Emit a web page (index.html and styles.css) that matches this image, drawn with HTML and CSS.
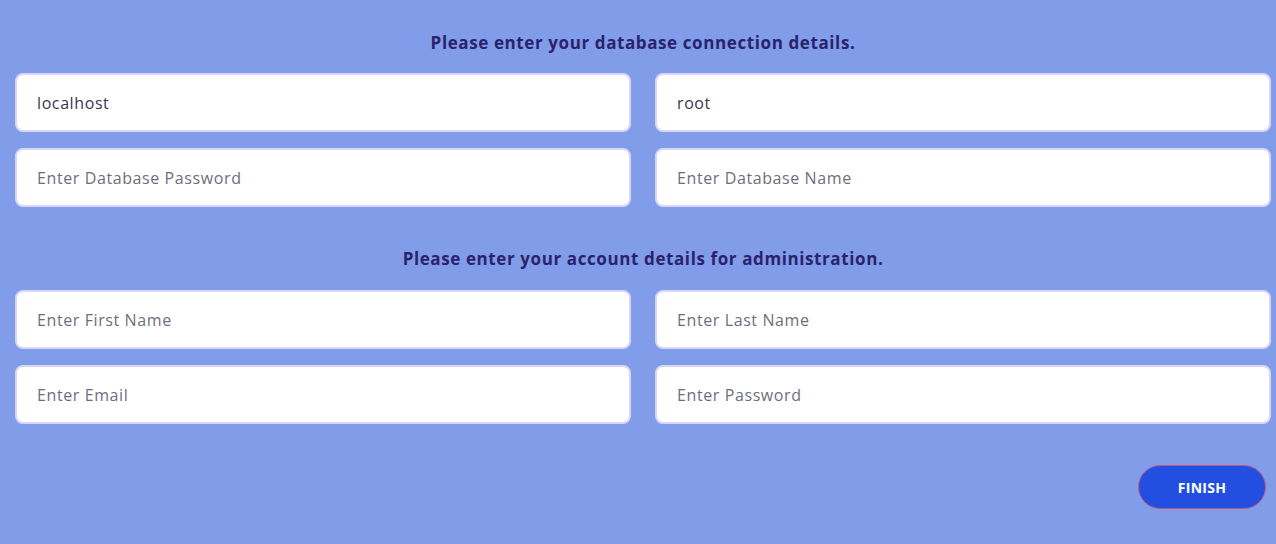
FILE: index.html
```html
<!DOCTYPE html>
<html lang="en">
<head>
<meta charset="utf-8">
<title>Install</title>
<link rel="stylesheet" href="styles.css">
</head>
<body>
<form class="setup">
  <h2 class="section-title">Please enter your database connection details.</h2>
  <div class="grid">
    <input class="field" type="text" value="localhost">
    <input class="field" type="text" value="root">
    <input class="field" type="password" placeholder="Enter Database Password">
    <input class="field" type="text" placeholder="Enter Database Name">
  </div>
  <h2 class="section-title second">Please enter your account details for administration.</h2>
  <div class="grid">
    <input class="field" type="text" placeholder="Enter First Name">
    <input class="field" type="text" placeholder="Enter Last Name">
    <input class="field" type="email" placeholder="Enter Email">
    <input class="field" type="password" placeholder="Enter Password">
  </div>
  <div class="actions">
    <button class="finish" type="button">FINISH</button>
  </div>
</form>
</body>
</html>
```

FILE: styles.css
```css
html, body {
  margin: 0;
  padding: 0;
  background: #819ce8;
  height: 100%;
}
body {
  font-family: "Open Sans", "Liberation Sans", sans-serif;
}
.setup {
  padding: 30px 5px 0 15px;
  display: flex;
  flex-direction: column;
}
.section-title {
  margin: 0 0 17px;
  text-align: center;
  font-size: 17px;
  font-weight: 700;
  letter-spacing: 0.6px;
  color: #2b226e;
  line-height: 26px;
}
.section-title.second {
  margin-top: 39px;
  margin-bottom: 18px;
}
.grid {
  display: grid;
  grid-template-columns: 1fr 1fr;
  column-gap: 24px;
  row-gap: 16px;
}
.field {
  box-sizing: border-box;
  height: 59px;
  width: 100%;
  border: 2px solid #d9d5f7;
  border-radius: 8px;
  background: #fff;
  padding: 0 20px;
  font-family: inherit;
  font-size: 16px;
  letter-spacing: 0.6px;
  color: #3b3552;
  outline: none;
}
.field::placeholder {
  color: #6c6f7b;
  opacity: 1;
}
.actions {
  display: flex;
  justify-content: flex-end;
  padding-top: 41px;
  padding-right: 5px;
}
.finish {
  width: 128px;
  height: 44px;
  border-radius: 22px;
  border: 1px solid #c0577f;
  background: #234fe0;
  color: #fff;
  font-family: inherit;
  font-size: 14px;
  font-weight: 700;
  letter-spacing: 0.3px;
  cursor: pointer;
}
```
